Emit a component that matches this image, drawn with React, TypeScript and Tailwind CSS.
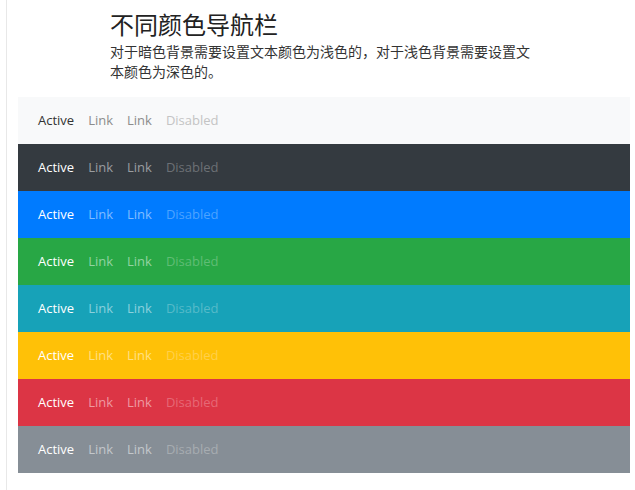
const bars = [
  { bg: "bg-[#f8f9fa]", active: "text-[#333]", link: "text-[#8c8c8c]", dis: "text-[#c4c4c4]" },
  { bg: "bg-[#343a40]", active: "text-white", link: "text-[#9a9da0]", dis: "text-[#6c7075]" },
  { bg: "bg-[#007bff]", active: "text-white", link: "text-[#80bdff]", dis: "text-[#4da3ff]" },
  { bg: "bg-[#28a745]", active: "text-white", link: "text-[#93d3a2]", dis: "text-[#5fbd74]" },
  { bg: "bg-[#17a2b8]", active: "text-white", link: "text-[#8bd0dc]", dis: "text-[#55bac9]" },
  { bg: "bg-[#ffc107]", active: "text-white", link: "text-[#ffe083]", dis: "text-[#ffd04a]" },
  { bg: "bg-[#dc3545]", active: "text-white", link: "text-[#ee9aa2]", dis: "text-[#e66875]" },
  { bg: "bg-[#868e96]", active: "text-white", link: "text-[#c3c7cb]", dis: "text-[#a6acb1]" },
];

export default function App() {
  return (
    <div
      className="w-[635px] h-[490px] bg-white flex"
      style={{ fontFamily: '"Open Sans", "Noto Sans CJK SC", sans-serif' }}
    >
      <div className="w-[4px] ml-[3px] border-r border-[#e8e8e8]" />
      <div className="ml-[11px] w-[612px]">
        <div className="pl-[92px] pt-[8px] h-[97px]">
          <h1 className="text-[24px] leading-[34px] text-[#222]">不同颜色导航栏</h1>
          <p className="text-[14px] leading-[20px] text-[#333] w-[430px]">
            对于暗色背景需要设置文本颜色为浅色的，对于浅色背景需要设置文本颜色为深色的。
          </p>
        </div>
        {bars.map((b, i) => (
          <div key={i} className={`${b.bg} h-[47px] flex items-center pl-[20px] gap-[14px] text-[13px]`}>
            <span className={b.active}>Active</span>
            <span className={b.link}>Link</span>
            <span className={b.link}>Link</span>
            <span className={b.dis}>Disabled</span>
          </div>
        ))}
      </div>
    </div>
  );
}
